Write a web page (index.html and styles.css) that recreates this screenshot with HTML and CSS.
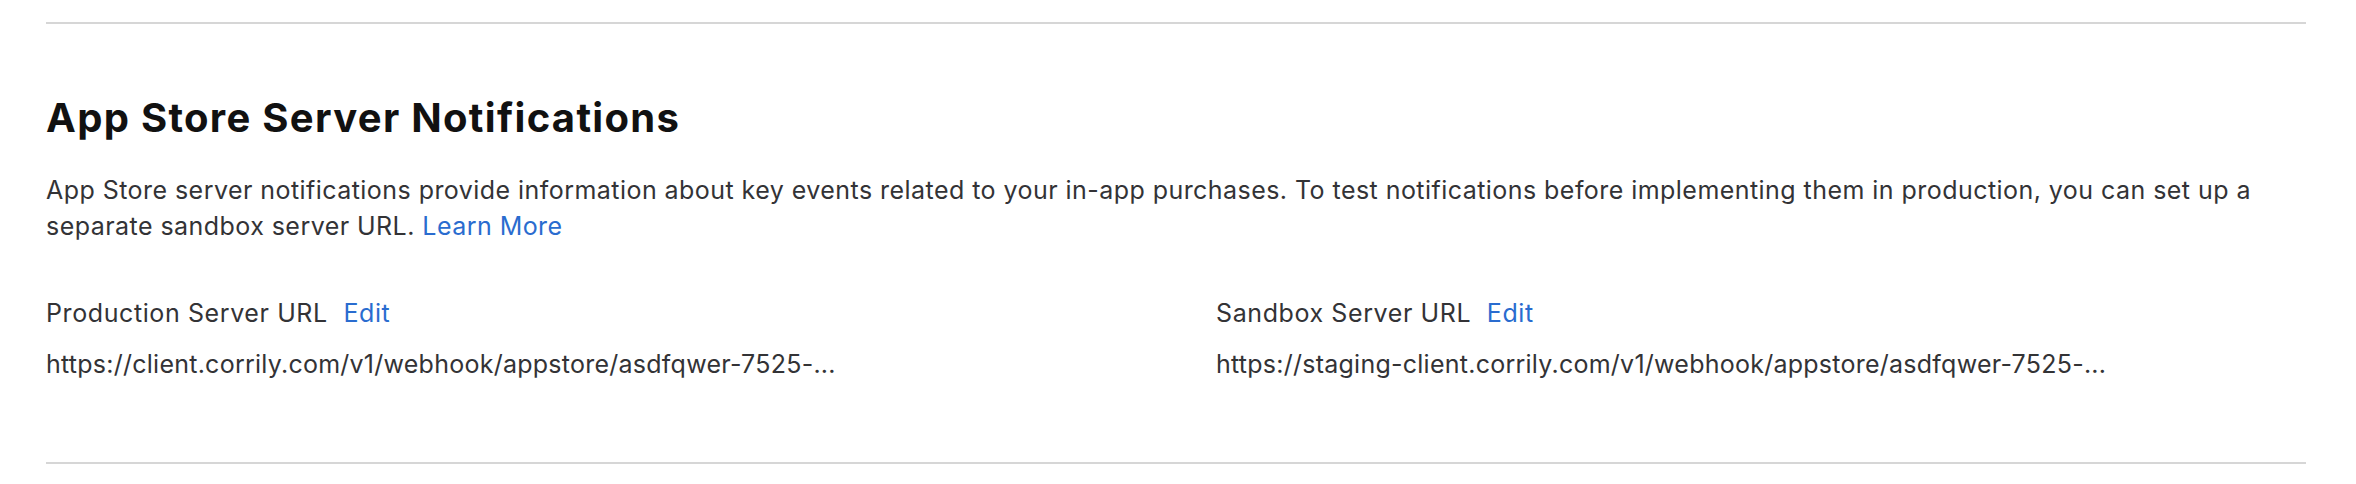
FILE: index.html
```html
<!DOCTYPE html>
<html lang="en">
<head>
<meta charset="utf-8">
<title>App Store Server Notifications</title>
<link rel="stylesheet" href="styles.css">
</head>
<body>
<div class="page">
  <section class="section">
    <h2 class="title">App Store Server Notifications</h2>
    <p class="desc">App Store server notifications provide information about key events related to your in-app purchases. To test notifications before implementing them in production, you can set up a separate sandbox server URL. <a class="link" href="#">Learn More</a></p>
    <div class="fields">
      <div class="field">
        <div class="label">Production Server URL <a class="link edit" href="#">Edit</a></div>
        <div class="value">https://client.corrily.com/v1/webhook/appstore/asdfqwer-7525-...</div>
      </div>
      <div class="field">
        <div class="label">Sandbox Server URL <a class="link edit" href="#">Edit</a></div>
        <div class="value">https://staging-client.corrily.com/v1/webhook/appstore/asdfqwer-7525-...</div>
      </div>
    </div>
  </section>
</div>
</body>
</html>
```

FILE: styles.css
```css
* { box-sizing: border-box; }
html, body { margin: 0; padding: 0; background: #fff; }
body {
  font-family: Inter, "Noto Sans", "Liberation Sans", sans-serif;
  color: #333336;
}
.page {
  padding: 22px 50px 0 46px;
}
.section {
  border-top: 2px solid #d6d6d6;
  border-bottom: 2px solid #d6d6d6;
  padding: 70px 0 80px 0;
}
.title {
  margin: 0;
  font-size: 40px;
  line-height: 48px;
  font-weight: 700;
  letter-spacing: 1.3px;
  color: #111;
}
.desc {
  margin: 30px 0 0 0;
  font-size: 25px;
  line-height: 36px;
  letter-spacing: 0.45px;
  max-width: 2260px;
}
.link {
  color: #2a6ccf;
  text-decoration: none;
}
.fields {
  margin-top: 52px;
  display: grid;
  grid-template-columns: 1fr 1fr;
  column-gap: 80px;
}
.label {
  font-size: 25px;
  line-height: 35px;
  letter-spacing: 0.6px;
}
.edit { margin-left: 8px; }
.value {
  margin-top: 16px;
  font-size: 25px;
  line-height: 35px;
  letter-spacing: 0.25px;
}
```
